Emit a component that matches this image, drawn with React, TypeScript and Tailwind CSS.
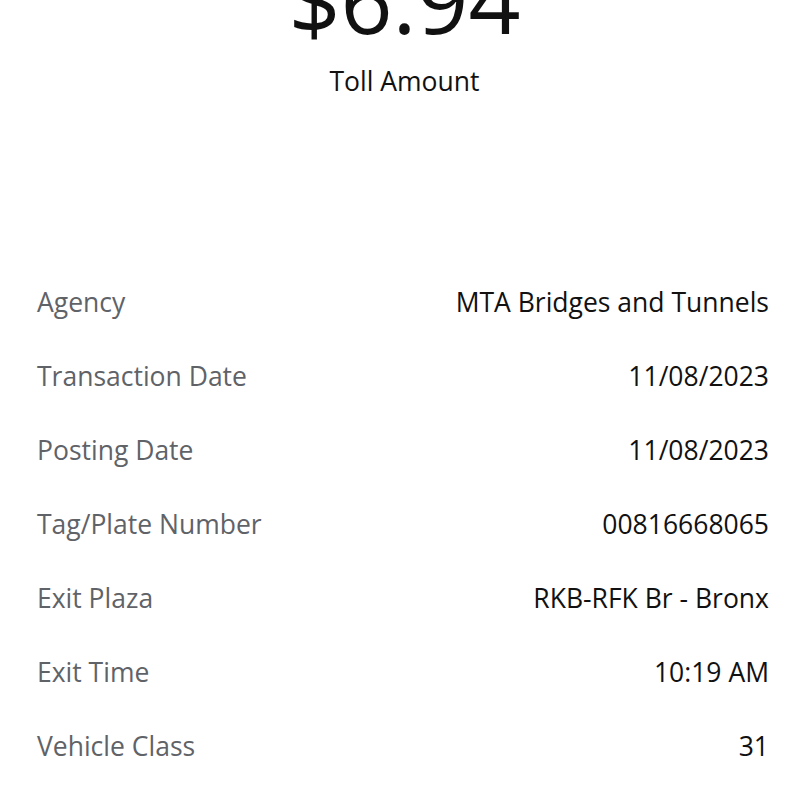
const rows = [
  { label: 'Agency', value: 'MTA Bridges and Tunnels' },
  { label: 'Transaction Date', value: '11/08/2023' },
  { label: 'Posting Date', value: '11/08/2023' },
  { label: 'Tag/Plate Number', value: '00816668065' },
  { label: 'Exit Plaza', value: 'RKB-RFK Br - Bronx' },
  { label: 'Exit Time', value: '10:19 AM' },
  { label: 'Vehicle Class', value: '31' },
]

export default function App() {
  return (
    <div className="h-[800px] overflow-hidden bg-white font-['Open_Sans',sans-serif]">
      <div className="flex flex-col items-center -mt-[46px] pl-[9px]">
        <div className="text-[91px] leading-none text-[#111]">$6.94</div>
        <div className="mt-[18px] text-[26.5px] leading-[36px] text-[#111]">Toll Amount</div>
      </div>

      <div className="mt-[167px] flex flex-col pl-[37px] pr-[31px]">
        {rows.map(row => (
          <div key={row.label} className="flex h-[74px] items-center justify-between text-[26.5px]">
            <span className="text-[#5f6368]">{row.label}</span>
            <span className="text-[#111]">{row.value}</span>
          </div>
        ))}
      </div>
    </div>
  )
}
